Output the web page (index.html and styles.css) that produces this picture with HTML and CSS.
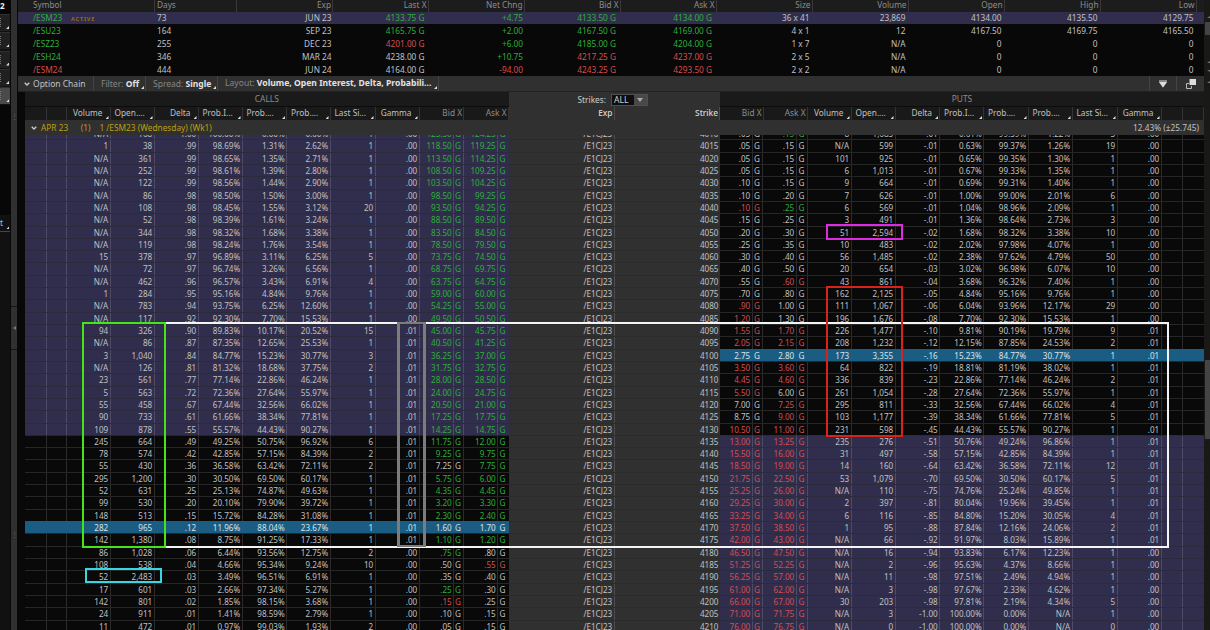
FILE: index.html
```
<!DOCTYPE html>
<html lang="en">
<head>
    <meta charset="UTF-8">
    <meta name="viewport" content="width=device-width, initial-scale=1.0">
    <title>Option Chain</title>
    <link rel="stylesheet" href="styles.css">
</head>
<body>
    <div class="app">
        <div class="sidebar">
            <div class="side-title">2</div>
            <div class="side-tab"></div>
            <div class="side-tab"></div>
            <div class="side-tab"></div>
            <div class="side-tab"></div>
            <div class="side-tab selected"></div>
            <div class="side-gap"></div>
            <div class="side-text">t</div>
        </div>
        <div class="divider">
            <div class="grip top-grip">⋮</div>
            <div class="collapse"><svg width="3" height="4" viewBox="0 0 3 4"><path d="M3 0v4L0 2z" fill="#777"/></svg></div>
            <div class="grip">⋮</div>
        </div>
        <div class="main">
            <div class="futures" id="futures"></div>

            <div class="toolbar">
                <div class="tool title">
                    <svg width="6" height="4" viewBox="0 0 6 4"><path d="M.7.7L3 3 5.3.7" fill="none" stroke="#ccc" stroke-width="1.3"/></svg>
                    <span>Option Chain</span>
                </div>
                <div class="tool filter corner">Filter: <b>Off</b></div>
                <div class="tool spread corner">Spread: <b>Single</b></div>
                <div class="tool layout corner">Layout: <b>Volume, Open Interest, Delta, Probabili...</b></div>
                <div class="tool-space"></div>
                <div class="tool icon">
                    <svg width="8" height="8" viewBox="0 0 8 8"><path d="M0 0h8v2L4 7.5 0 2z" fill="#888"/><path d="M0 2h8L4 7.5z" fill="#ddd"/></svg>
                </div>
                <div class="tool icon">
                    <svg width="11" height="10" viewBox="0 0 11 10"><path d="M4 4.500H1.500v5h5V7" fill="none" stroke="#bbb"/><path d="M4.500 0H11v6H4.500z" fill="#ddd"/></svg>
                </div>
            </div>

            <div class="chain">
                <div class="groups">
                    <div class="side-name calls-name">CALLS</div>
                    <div class="strikes">
                        <span>Strikes:</span>
                        <div class="select">
                            <span>ALL</span>
                            <i><svg width="6" height="4" viewBox="0 0 6 4"><path d="M0 0h6L3 4z" fill="#aaa"/></svg></i>
                        </div>
                    </div>
                    <div class="side-name">PUTS</div>
                </div>
                <div class="columns" id="columns"></div>
                <div class="expiry">
                    <svg width="6" height="4" viewBox="0 0 6 4"><path d="M.7.7L3 3 5.3.7" fill="none" stroke="#ccc" stroke-width="1.3"/></svg>
                    <span class="month">APR 23</span>
                    <span class="count">(1)</span>
                    <span>1 /ESM23 (Wednesday) (Wk1)</span>
                    <span class="move">12.43% (±25.745)</span>
                </div>
                <div class="rows"><div class="rows-inner" id="rows"></div></div>
            </div>
        </div>
        <div class="scroll">
            <i class="thumb small-thumb"></i>
            <i class="thumb big-thumb"></i>
            <i class="arrow up a1"></i>
            <i class="arrow up a2"></i>
            <i class="arrow a3"></i>
            <i class="arrow up a4"></i>
        </div>

        <!-- drawn marks over the chain -->
        <div class="mark white"></div>
        <div class="mark green"></div>
        <div class="mark grey"></div>
        <div class="mark cyan"></div>
        <div class="mark magenta"></div>
        <div class="mark red"></div>
    </div>

    <script src="chain.js"></script>
</body>
</html>
```
FILE: chain.js
```
// g / r in front of a price is its colour
const futures = [
    "g/ESM23|73|JUN 23|g4133.75 G|g+4.75|g4133.50 G|g4134.00 G|36 x 41|23,869|4134.00|4135.50|4129.75",
    "g/ESU23|164|SEP 23|g4165.75 G|g+2.00|g4167.50 G|g4169.00 G|4 x 1|12|4167.50|4169.75|4165.50",
    "g/ESZ23|255|DEC 23|r4201.00 G|g+6.00|g4185.00 G|g4204.00 G|1 x 7|N/A|0|0|0",
    "g/ESH24|346|MAR 24|4238.00 G|g+10.75|r4217.25 G|r4237.00 G|2 x 5|N/A|0|0|0",
    "r/ESM24|444|JUN 24|4164.00 G|r-94.00|r4243.25 G|r4293.50 G|2 x 2|N/A|0|0|0"
]

// calls: volume, open int, delta, prob x3, last size, gamma, bid, ask / puts: bid, ask, volume ...
const chain = [
    "N/A|168|1.00|100.00%|0.00%|0.00%|1|.00|g123.50|g124.25/.05|g.15|8|1,683|-.01|0.61%|99.39%|1.22%|3|.00",
    "1|38|.99|98.69%|1.31%|2.62%|1|.00|g118.50|g119.25/.05|.15|N/A|599|-.01|0.63%|99.37%|1.26%|19|.00",
    "N/A|361|.99|98.65%|1.35%|2.71%|1|.00|g113.50|g114.25/.05|.15|101|925|-.01|0.65%|99.35%|1.30%|1|.00",
    "N/A|252|.99|98.61%|1.39%|2.80%|1|.00|g108.50|g109.25/.05|.15|6|1,013|-.01|0.67%|99.33%|1.35%|1|.00",
    "N/A|122|.99|98.56%|1.44%|2.90%|1|.00|g103.50|g104.25/.10|.15|9|664|-.01|0.69%|99.31%|1.40%|1|.00",
    "N/A|86|.98|98.50%|1.50%|3.00%|1|.00|g98.50|g99.25/.10|.20|7|626|-.01|1.00%|99.00%|2.01%|6|.00",
    "N/A|108|.98|98.45%|1.55%|3.12%|20|.00|g93.50|g94.25/r.10|g.25|6|569|-.01|1.04%|98.96%|2.09%|1|.00",
    "N/A|52|.98|98.39%|1.61%|3.24%|1|.00|g88.50|g89.50/.15|.25|3|491|-.01|1.36%|98.64%|2.73%|3|.00",
    "N/A|344|.98|98.32%|1.68%|3.38%|1|.00|g83.50|g84.50/.20|.30|51|2,594|-.02|1.68%|98.32%|3.38%|10|.00",
    "N/A|119|.98|98.24%|1.76%|3.54%|1|.00|g78.50|g79.50/.25|.35|10|483|-.02|2.02%|97.98%|4.07%|1|.00",
    "15|378|.97|96.89%|3.11%|6.25%|5|.00|g73.75|g74.50/.30|.40|56|1,485|-.02|2.38%|97.62%|4.79%|50|.00",
    "N/A|72|.97|96.74%|3.26%|6.56%|1|.00|g68.75|g69.75/.40|.50|20|654|-.03|3.02%|96.98%|6.07%|10|.00",
    "N/A|462|.96|96.57%|3.43%|6.91%|4|.00|g63.75|g64.75/.55|r.60|43|861|-.04|3.68%|96.32%|7.40%|1|.00",
    "1|284|.95|95.16%|4.84%|9.76%|1|.00|g59.00|g60.00/.70|.80|162|2,125|-.05|4.84%|95.16%|9.76%|1|.00",
    "N/A|783|.94|93.75%|6.25%|12.60%|1|.00|g54.25|g55.00/r.90|1.00|111|1,067|-.06|6.04%|93.96%|12.17%|29|.00",
    "N/A|117|.92|92.30%|7.70%|15.53%|1|.00|g49.50|g50.50/r1.20|1.30|196|1,676|-.08|7.70%|92.30%|15.53%|1|.00",
    "94|326|.90|89.83%|10.17%|20.52%|15|.01|g45.00|g45.75/r1.55|r1.70|226|1,477|-.10|9.81%|90.19%|19.79%|9|.01",
    "N/A|86|.87|87.35%|12.65%|25.53%|1|.01|g40.50|g41.25/r2.05|r2.15|208|1,232|-.12|12.15%|87.85%|24.53%|2|.01",
    "3|1,040|.84|84.77%|15.23%|30.77%|3|.01|g36.25|g37.00/2.75|2.80|173|3,355|-.16|15.23%|84.77%|30.77%|1|.01",
    "N/A|126|.81|81.32%|18.68%|37.75%|2|.01|g31.75|g32.75/r3.50|r3.60|64|822|-.19|18.81%|81.19%|38.02%|1|.01",
    "23|561|.77|77.14%|22.86%|46.24%|1|.01|g28.00|g28.50/r4.45|r4.60|336|839|-.23|22.86%|77.14%|46.24%|2|.01",
    "5|563|.72|72.36%|27.64%|55.97%|1|.01|g24.00|g24.75/r5.50|6.00|261|1,054|-.28|27.64%|72.36%|55.97%|1|.01",
    "55|458|.67|67.44%|32.56%|66.02%|1|.01|g20.50|g21.00/7.00|r7.25|295|811|-.33|32.56%|67.44%|66.02%|4|.01",
    "90|733|.61|61.66%|38.34%|77.81%|1|.01|g17.25|g17.75/8.75|r9.00|103|1,177|-.39|38.34%|61.66%|77.81%|5|.01",
    "109|878|.55|55.57%|44.43%|90.27%|1|.01|g14.25|g14.75/r10.50|r11.00|231|598|-.45|44.43%|55.57%|90.27%|1|.01",
    "245|664|.49|49.25%|50.75%|96.92%|6|.01|g11.75|g12.00/r13.00|r13.25|235|276|-.51|50.76%|49.24%|96.86%|1|.01",
    "78|574|.42|42.85%|57.15%|84.39%|2|.01|g9.25|g9.75/r15.50|r16.00|31|497|-.58|57.15%|42.85%|84.39%|1|.01",
    "55|430|.36|36.58%|63.42%|72.11%|2|.01|7.25|g7.75/r18.50|r19.00|14|160|-.64|63.42%|36.58%|72.11%|12|.01",
    "295|1,200|.30|30.50%|69.50%|60.17%|1|.01|g5.75|g6.00/r21.75|r22.50|53|1,079|-.70|69.50%|30.50%|60.17%|5|.01",
    "52|631|.25|25.13%|74.87%|49.63%|1|.01|g4.35|g4.45/r25.25|r26.00|N/A|110|-.75|74.76%|25.24%|49.85%|1|.01",
    "99|530|.20|20.10%|79.90%|39.72%|1|.01|g3.20|g3.30/r29.25|r30.00|2|397|-.81|80.04%|19.96%|39.45%|1|.01",
    "148|513|.15|15.72%|84.28%|31.08%|1|.01|g2.30|g2.40/r33.25|r34.00|6|116|-.85|84.80%|15.20%|30.05%|4|.01",
    "282|965|.12|11.96%|88.04%|23.67%|1|.01|1.60|1.70/r37.50|r38.50|1|95|-.88|87.84%|12.16%|24.06%|2|.01",
    "142|1,380|.08|8.75%|91.25%|17.33%|1|.01|g1.10|g1.20/r42.00|r43.00|N/A|66|-.92|91.97%|8.03%|15.89%|1|.01",
    "86|1,028|.06|6.44%|93.56%|12.75%|2|.00|g.75|.80/r46.50|r47.50|N/A|16|-.94|93.83%|6.17%|12.23%|1|.00",
    "108|538|.04|4.66%|95.34%|9.24%|10|.00|.50|r.55/r51.25|r52.25|N/A|2|-.96|95.63%|4.37%|8.66%|1|.00",
    "52|2,483|.03|3.49%|96.51%|6.91%|1|.00|.35|.40/r56.25|r57.00|N/A|11|-.98|97.51%|2.49%|4.94%|1|.00",
    "17|601|.03|2.66%|97.34%|5.27%|1|.00|g.25|.30/r61.00|r62.00|N/A|3|-.98|97.67%|2.33%|4.62%|1|.00",
    "142|801|.02|1.85%|98.15%|3.68%|1|.00|r.15|.25/r66.00|r67.00|30|203|-.98|97.81%|2.19%|4.34%|5|.00",
    "24|911|.01|1.41%|98.59%|2.79%|1|.00|.10|.15/r71.00|r71.75|N/A|3|-1.00|100.00%|0.00%|N/A|1|.00",
    "11|472|.01|0.97%|99.03%|1.93%|2|.00|.05|.15/r76.00|r76.75|N/A|0|-1.00|100.00%|0.00%|N/A|0|.00"
]

function cell(value, cls = "") {
    if (value[0] === "g") { cls += " up-price"; value = value.slice(1) }
    else if (value[0] === "r") { cls += " down-price"; value = value.slice(1) }
    return `<div class="cell ${cls}">${value}</div>`
}

function price(value) {
    const color = value[0] === "g" || value[0] === "r" ? value[0] : ""
    return cell(value) + cell(color + "G", "exchange")
}

// ten values on each side, the slash of "N/A" is not a separator
function splitRow(line) {
    const values = line.replace(/N\/A/g, "NA").replace("/", "|").split("|").map(v => v === "NA" ? "N/A" : v)
    return [values.slice(0, 10), values.slice(10)]
}

const heads = ["Symbol", "Days", "Exp", "Last X", "Net Chng", "Bid X", "Ask X", "Size", "Volume", "Open", "High", "Low"]
document.getElementById("futures").innerHTML =
    `<div class="f-row f-head">${heads.map(h => cell(h)).join("")}<div></div></div>` +
    futures.map((line, i) => {
        const cells = line.split("|").map(v => cell(v))
        if (i === 0) cells[0] = cells[0].replace("</div>", '<span class="active">ACTIVE</span></div>')
        return `<div class="f-row${i === 0 ? " current" : ""}">${cells.join("")}<div></div></div>`
    }).join("")

const stats = ["Volume", "Open....", "Delta", "Prob.I...", "Prob....", "Prob....", "Last Si...", "Gamma"]
const statHeads = stats.map(s => cell(s, s.endsWith("...") ? "corner cut" : "corner")).join("")
const quoteHeads = '<div class="cell dim">Bid X</div><div class="cell dim">Ask X</div>'
document.getElementById("columns").innerHTML =
    cell("") + cell("") + statHeads + quoteHeads +
    '<div class="cell mid">Exp</div><div class="cell mid">Strike</div>' +
    quoteHeads + statHeads + cell("") + cell("")

document.getElementById("rows").innerHTML = chain.map((line, i) => {
    const strike = 4010 + i * 5
    const [calls, puts] = splitRow(line)
    const callCls = strike === 4170 ? "picked" : strike <= 4130 ? "itm" : ""
    const putCls = strike === 4100 ? "picked" : strike > 4130 ? "itm" : ""
    return `<div class="row">
        <div class="calls ${callCls}">${cell("")}${cell("")}${calls.slice(0, 8).map(v => cell(v)).join("")}${calls.slice(8).map(price).join("")}</div>
        <div class="middle">${cell("/E1CJ23")}${cell(String(strike))}</div>
        <div class="puts ${putCls}">${puts.slice(0, 2).map(price).join("")}${puts.slice(2).map(v => cell(v)).join("")}${cell("")}${cell("")}</div>
    </div>`
}).join("")
```
FILE: styles.css
```
* {
    box-sizing: border-box;
}

body {
    margin: 0;
    background: #080808;
    color: #c0c0c0;
    font-family: "Noto Sans", sans-serif;
    font-size: 8.1px;
    overflow: hidden;
}

.app {
    position: relative;
    display: flex;
    width: 1210px;
    height: 630px;
    overflow: hidden;
}

/* left edge */
.sidebar {
    width: 11px;
    background: #111;
    border-right: 1px solid #080808;
}

.side-title {
    height: 14px;
    background: #050505;
    color: #eee;
    font-weight: bold;
    line-height: 12px;
}

.side-tab {
    position: relative;
    height: 17px;
    margin-bottom: 1.3px;
    background: #202020;
    border-top: 1px solid #303030;
}

.side-tab::before {
    content: "";
    display: block;
    width: 1px;
    height: 9px;
    margin-top: 3px;
    border-left: 1px dotted #777;
}

.side-tab.selected {
    background: #4a4a4a;
}

.side-tab::after,
.side-text::after,
.corner::after {
    content: "";
    position: absolute;
    right: 1px;
    bottom: 2px;
    width: 3px;
    height: 3px;
    background: #ddd;
    clip-path: polygon(100% 0, 100% 100%, 0 100%);
}

.side-gap {
    height: 110px;
    background: #070707;
}

.side-text {
    position: relative;
    height: 17px;
    border-bottom: 1px solid #444;
    line-height: 16px;
}

.divider {
    display: flex;
    flex-direction: column;
    width: 6px;
    background: #303030;
}

.grip {
    padding-top: 180px;
    color: #666;
    font-size: 7px;
    line-height: 10px;
    text-align: center;
}

.grip.top-grip {
    height: 306px;
    padding-top: 112px;
}

.collapse {
    display: flex;
    align-items: center;
    justify-content: center;
    height: 44px;
    border-top: 1px solid #151515;
    border-bottom: 1px solid #151515;
}

.main {
    display: flex;
    flex-direction: column;
    width: 1187px;
    padding-left: 1px;
}

/* futures table */
.futures {
    height: 76px;
    font-size: 8.25px;
}

.f-row {
    display: grid;
    grid-template-columns: 137px 82px 96px 95.5px 96px 96px 96px 96px 96px 96px 96px 96px 1fr;
    height: 13.1px;
    line-height: 13px;
    text-align: right;
    padding-right: 2px;
}

.f-row .cell {
    padding-right: 3px;
}

.f-row .cell:nth-child(3),
.f-row .cell:nth-child(5) {
    padding-right: 1.5px;
}

.f-row .cell:nth-child(4) {
    padding-right: 4px;
}

.f-row .cell:nth-child(6),
.f-row .cell:nth-child(7) {
    padding-right: 4.5px;
}

.f-row .cell:nth-child(1) {
    padding-left: 15px;
    text-align: left;
}

.f-row .cell:nth-child(2) {
    padding-left: 2px;
    text-align: left;
}

.f-row.f-head {
    height: 12px;
    background: #1c1c1c;
    color: #8c8c8c;
    line-height: 10px;
}

.f-row.f-head .cell {
    padding-right: 1px;
    border-right: 1px solid #383838;
}

.f-row.current {
    height: 12px;
    background: #302e4c;
    line-height: 12px;
}

.active {
    margin-left: 9px;
    color: #96691c;
    font-size: 5.5px;
    font-weight: bold;
    letter-spacing: 0.8px;
    vertical-align: 0.5px;
}

.up-price {
    color: #2eae3a;
}

.down-price {
    color: #d64d4f;
}

/* toolbar */
.toolbar {
    display: flex;
    height: 16px;
    background: #303030;
    border-bottom: 1px solid #222;
    color: #858585;
    font-size: 8.5px;
    line-height: 15px;
}

.toolbar b {
    color: #e2e2e2;
}

.tool {
    position: relative;
    padding-left: 7px;
    border-right: 1px solid #444;
    white-space: nowrap;
}

.title {
    display: flex;
    align-items: center;
    gap: 3.5px;
    width: 76px;
    padding-left: 5.5px;
    color: #c0c0c0;
}

.filter {
    width: 52px;
}

.spread {
    width: 72px;
}

.layout {
    width: 221px;
    font-size: 8.6px;
}

.tool-space {
    flex: 1;
    border-right: 1px solid #444;
}

.tool.icon {
    display: flex;
    align-items: center;
    justify-content: center;
    width: 27px;
    padding: 0;
}

.tool.icon:last-child {
    border: 0;
}

/* option chain */
.chain {
    display: flex;
    flex-direction: column;
    height: 538px;
    margin-left: 7px;
}

.groups {
    display: grid;
    grid-template-columns: 483.5px 211.5px 1fr;
    height: 15px;
}

.side-name {
    background: #1a1a1a;
    color: #8c8c8c;
    font-size: 8.4px;
    line-height: 14px;
    text-align: center;
    border-bottom: 1px solid #0c0c0c;
}

.strikes {
    display: flex;
    justify-content: center;
    align-items: center;
    gap: 5px;
    padding-right: 3px;
    background: #303030;
    color: #ccc;
    font-size: 8.3px;
    line-height: 13px;
}

.select {
    display: flex;
    justify-content: space-between;
    width: 37px;
    height: 12px;
    padding-left: 2px;
    border: 1px solid #505050;
    background: #0e0e0e;
    font-size: 8.6px;
    line-height: 10px;
}

.select i {
    display: flex;
    align-items: center;
    justify-content: center;
    width: 13px;
    background: #484848;
}

.columns {
    display: grid;
    grid-template-columns: 21.5px 20px 44px 44px 44px 44px 44.5px 43.5px 45px 44px 44.5px 44.5px 106px 105.5px 43.5px 44px 44px 44px 44.5px 44px 44.5px 44px 45px 44px 21px 1fr;
    height: 13px;
    background: #191919;
    font-size: 8.3px;
    line-height: 12.5px;
    text-align: right;
}

.columns .cell {
    position: relative;
    padding-right: 1px;
    border-right: 1px solid #333;
    white-space: nowrap;
}

.columns .corner {
    padding-right: 7px;
}

.columns .cut {
    padding: 0 0 0 4px;
    text-align: left;
}

.columns .corner::after {
    right: 1px;
    bottom: 1px;
}

.columns .dim {
    color: #8c8c8c;
}

.columns .mid {
    background: #303030;
    border-color: #484848;
    color: #d8d8d8;
    font-weight: 500;
}

.expiry {
    display: flex;
    align-items: center;
    height: 15px;
    padding: 0 5px 0 6px;
    background: #303030;
    color: #bd9f0e;
    font-size: 8.3px;
    line-height: 14px;
}

.month {
    margin: 0 12.5px 0 4px;
}

.count {
    margin-right: 9px;
}

.move {
    margin-left: auto;
    color: #c0c0c0;
}

.rows {
    flex: 1;
    overflow: hidden;
}

.rows-inner {
    margin-top: -8px;
}

.row {
    display: grid;
    grid-template-columns: 483.5px 211.5px 1fr;
    height: 12.32px;
    line-height: 12.2px;
    text-align: right;
}

.calls,
.middle,
.puts {
    display: grid;
    border-top: 1px solid #262626;
    background: #090909;
}

.calls {
    grid-template-columns: 21.5px 20px 44px 44px 44px 44px 44.5px 43.5px 45px 44px 34.5px 10px 34px 10.5px;
}

.middle {
    grid-template-columns: 106px 105.5px;
    background: #303030;
    border-color: #2b2b2b;
}

.puts {
    grid-template-columns: 32.5px 10.5px 33.5px 11px 44px 44px 44.5px 44px 44.5px 44px 45px 44px 21px 1fr;
}

.row .cell {
    height: 11.32px;
    padding-right: 1.3px;
    border-right: 1px solid rgba(255, 255, 255, 0.14);
}

.row .exchange {
    padding-right: 2px;
}

.middle .cell:last-child,
.calls .cell:last-child,
.puts .cell:last-child {
    border-color: transparent;
}

.middle .cell:last-child {
    padding-right: 0.5px;
}

.itm {
    background: #302e4c;
    border-color: #2b2b3b;
}

.picked {
    background: #1b5d82;
    border-color: #1b5d82;
    color: #d6e3ea;
}

.picked .cell {
    border-color: transparent;
}

/* right edge */
.scroll {
    position: relative;
    width: 6px;
    background: #191917;
}

.thumb {
    position: absolute;
    left: 1px;
    width: 5px;
    background: #444;
}

.small-thumb {
    top: 22px;
    height: 13px;
}

.big-thumb {
    top: 360px;
    height: 79px;
}

.arrow {
    position: absolute;
    right: 0;
    width: 3px;
    height: 2px;
    background: #777;
    clip-path: polygon(0 0, 100% 0, 100% 100%);
}

.arrow.up {
    clip-path: polygon(100% 0, 100% 100%, 0 100%);
}

.a1 {
    top: 16px;
}

.a2 {
    top: 61px;
}

.a3 {
    top: 70px;
}

.a4 {
    top: 81px;
}

/* marks */
.mark {
    position: absolute;
    border: 2px solid;
}

.white {
    left: 165px;
    top: 322px;
    width: 1004px;
    height: 226px;
    border-color: #f4f4f4;
    border-left: 0;
}

.green {
    left: 82px;
    top: 322px;
    width: 84px;
    height: 226px;
    border-color: #43e51a;
}

.grey {
    left: 397px;
    top: 322px;
    width: 29px;
    height: 225px;
    border: 3px solid #7c7c7c;
    border-top-width: 2px;
    border-bottom-width: 2px;
}

.cyan {
    left: 85px;
    top: 568px;
    width: 77px;
    height: 15px;
    border-color: #3ad6df;
}

.magenta {
    left: 826px;
    top: 224px;
    width: 77px;
    height: 16px;
    border-color: #dc2be0;
}

.red {
    left: 826px;
    top: 286px;
    width: 77px;
    height: 151px;
    border-color: #d8231a;
}
```
